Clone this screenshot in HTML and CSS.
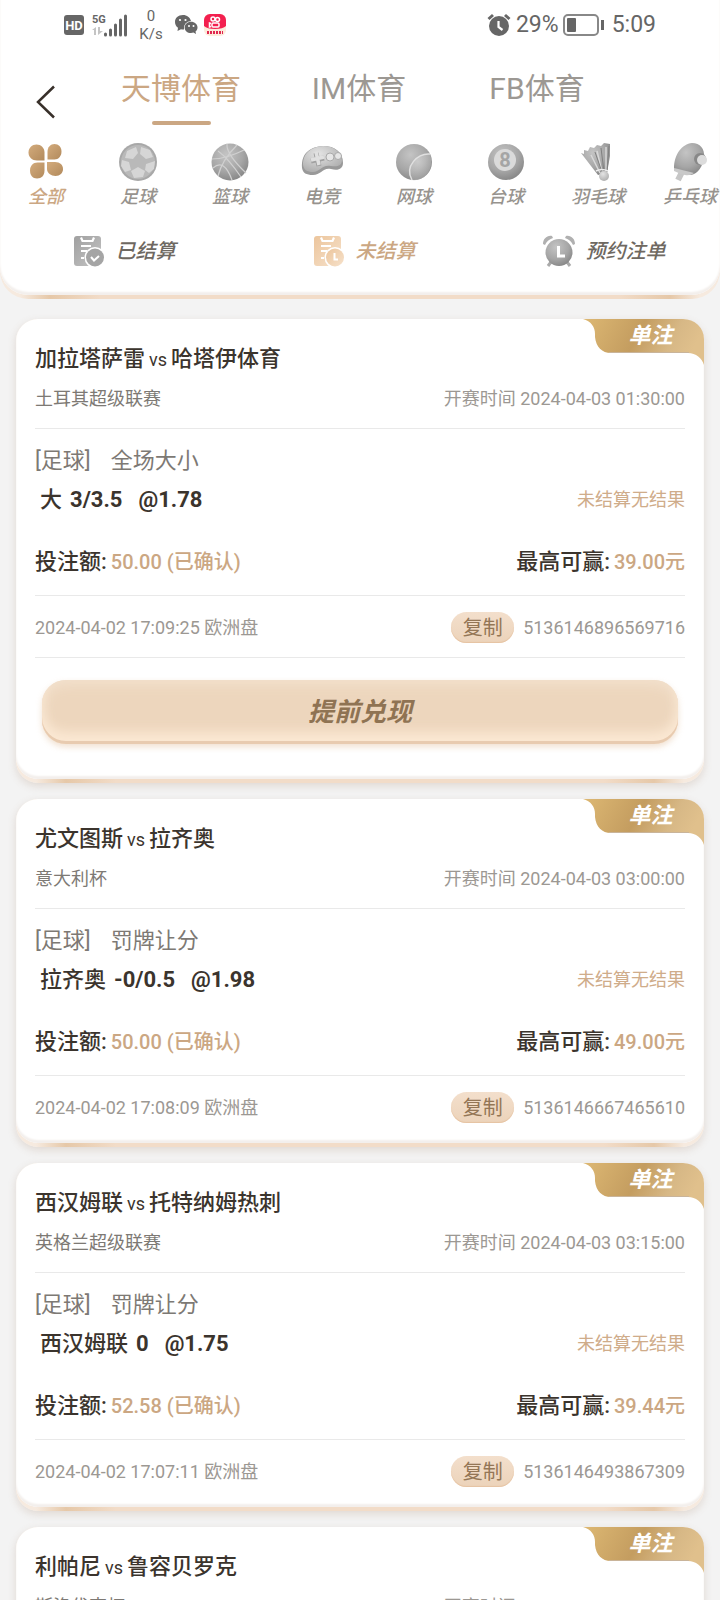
FILE: index.html
```
<!DOCTYPE html>
<html lang="zh-CN">
<head>
<meta charset="utf-8">
<meta name="viewport" content="width=device-width, initial-scale=1">
<title>未结算</title>
<link rel="stylesheet" href="styles.css">
</head>
<body>

<!-- shared shapes -->
<svg class="defs" aria-hidden="true">
    <defs>
        <linearGradient id="gold" x1="0" y1="0" x2="1" y2="0.2">
            <stop offset="0" stop-color="#ddb873"/>
            <stop offset="0.5" stop-color="#c49d60"/>
            <stop offset="0.8" stop-color="#d7b886"/>
            <stop offset="1" stop-color="#e0c08c"/>
        </linearGradient>
        <linearGradient id="leaf" x1="0" y1="0" x2="1" y2="1">
            <stop offset="0" stop-color="#d3ab7c"/>
            <stop offset="1" stop-color="#b28a5c"/>
        </linearGradient>
        <radialGradient id="ball" cx="0.4" cy="0.3" r="0.75">
            <stop offset="0" stop-color="#c4c4c4"/>
            <stop offset="0.6" stop-color="#a6a6a6"/>
            <stop offset="1" stop-color="#848484"/>
        </radialGradient>
        <radialGradient id="light" cx="0.4" cy="0.3" r="0.8">
            <stop offset="0" stop-color="#e4e4e4"/>
            <stop offset="1" stop-color="#a8a8a8"/>
        </radialGradient>
        <linearGradient id="gray" x1="0" y1="0" x2="1" y2="1">
            <stop offset="0" stop-color="#a0a0a0"/>
            <stop offset="1" stop-color="#c4c4c4"/>
        </linearGradient>
        <linearGradient id="peach" x1="0" y1="0" x2="1" y2="1">
            <stop offset="0" stop-color="#ecc59c"/>
            <stop offset="1" stop-color="#f6e2cc"/>
        </linearGradient>
        <symbol id="ribbon" viewBox="0 0 121 46">
            <path fill="url(#gold)" d="M0 0C8 2 12 8 12 15V18C13 28 19 34 28 34H105C113 34 119 39 121 46V20A21 20 0 0 0 100 0Z"/>
            <path stroke="#c9b49a" d="M26 33.500H106"/>
        </symbol>
    </defs>
</svg>

<header class="top">
    <div class="top-body">

        <div class="status">
            <svg class="status-hd" width="22" height="22" viewBox="0 0 22 22">
                <rect x="1" y="1" width="20" height="20" rx="3" fill="#666"/>
                <text x="11" y="16" text-anchor="middle">HD</text>
            </svg>
            <svg class="status-signal" width="36" height="24" viewBox="0 0 36 24">
                <text x="0" y="10">5G</text>
                <path fill="#c4c4c4" d="M0 17 4 14V22H2V17ZM6 14H8V18H11L6 22Z"/>
                <path d="M13.500 22V21M18.500 22V17M23.500 22V12M28.500 22V7M33.500 22V3" stroke="#666" stroke-width="3" stroke-linecap="round"/>
            </svg>
            <div class="status-speed"><div>0</div><div>K/s</div></div>
            <svg width="24" height="22" viewBox="0 0 24 22">
                <path fill="#666" d="M9 1C4 1 1 4 1 8c0 2.500 1.200 4.500 3 5.800L3.500 17 7 15.300c1 .200 2 .200 3 .100A7 7 0 0 1 17 7C16 3.500 13 1 9 1Z"/>
                <path fill="#666" d="M17 7.800c-3.700 0-6.300 2.500-6.300 5.600s2.600 5.600 6.300 5.600c.900 0 1.700-.100 2.400-.400L22 20l-.500-2.500c1.300-1 2-2.400 2-4.100 0-3.100-2.800-5.600-6.500-5.600Z"/>
                <g fill="#fff"><circle cx="6" cy="6" r="1.100"/><circle cx="11.500" cy="6" r="1.100"/><circle cx="15" cy="12" r="1"/><circle cx="19.500" cy="12" r="1"/></g>
            </svg>
            <svg class="status-app" width="24" height="24" viewBox="0 0 24 24">
                <rect x="1" y="1" width="22" height="22" rx="6" fill="#fdebdc"/>
                <path fill="#f3204f" d="M1 7a6 6 0 0 1 6-6h10a6 6 0 0 1 6 6v6q-3 3-11 3t-11-3Z"/>
                <g fill="none" stroke="#fff" stroke-width="1.500"><circle cx="10" cy="6" r="2"/><circle cx="14.500" cy="6.500" r="2"/><rect x="9" y="10" width="7" height="4" rx="1"/><path d="M8 10.500 6.500 10v4L8 13.500"/></g>
                <path stroke="#e0264f" stroke-width="3" stroke-dasharray="2 1" d="M4 19.500H20"/>
            </svg>
            <svg class="status-alarm" width="24" height="24" viewBox="0 0 24 24">
                <circle cx="12" cy="13" r="10" fill="#666"/>
                <path d="M1.500 6 6 2M22.500 6 18 2" stroke="#666" stroke-width="3"/>
                <path d="M11.500 8V14L15.500 17" fill="none" stroke="#fff" stroke-width="2.200"/>
            </svg>
            <span>29%</span>
            <svg width="42" height="24" viewBox="0 0 42 24">
                <rect x="1" y="2" width="34" height="20" rx="4" fill="none" stroke="#888" stroke-width="2"/>
                <rect x="4" y="5" width="9" height="14" rx="1" fill="#666"/>
                <path d="M39.500 7V17" stroke="#666" stroke-width="3"/>
            </svg>
            <span class="status-time">5:09</span>
        </div>

        <nav class="tabs">
            <button class="back" type="button" aria-label="返回">
                <svg width="20" height="34" viewBox="0 0 20 34"><path d="M18 1.500 2 17 18 32.500" fill="none" stroke="#38302a" stroke-width="2.500"/></svg>
            </button>
            <a class="tab tab-on" href="#tb">天博体育</a>
            <a class="tab" href="#im">IM体育</a>
            <a class="tab" href="#fb">FB体育</a>
        </nav>

        <nav class="sports">
            <a class="sport sport-on" href="#all">
                <svg width="40" height="40" viewBox="0 0 40 40" fill="url(#leaf)">
                    <path d="M18.500 18.500H11C6 18.500 2.500 15 2.500 10.500S6 2.500 10.500 2.500s8 3.500 8 8Z"/>
                    <path d="M21.500 17.500V10c0-5 3-8 7-8s7 3 7 7.500-3 8-7 8Z"/>
                    <path d="M18.500 20.500V28.500c0 5-3 8-7.500 8s-7-3.500-7-8 3-8 7.500-8Z"/>
                    <path d="M21 20H29c5 0 8 3 8 7s-3 7-7.500 7S21 31 21 27Z"/>
                </svg>
                <span>全部</span>
            </a>
            <a class="sport" href="#football">
                <svg width="40" height="40" viewBox="0 0 40 40">
                    <circle cx="20" cy="20" r="19" fill="#a8a8a8"/>
                    <circle cx="20" cy="20" r="17" fill="#b9b9b9"/>
                    <path fill="#d6d6d6" d="M9 9 18 5 20 11 15 17 7 16ZM23 5 32 8 35 15 28 17 22 12ZM4 18 11 20 13 28 7 30 3 24ZM13 29 20 25 27 29 25 35 16 36ZM28 22 37 19 36 27 31 31 27 28Z"/>
                </svg>
                <span>足球</span>
            </a>
            <a class="sport" href="#basketball">
                <svg width="40" height="40" viewBox="0 0 40 40">
                    <circle cx="20" cy="20" r="18.500" fill="url(#ball)"/>
                    <g fill="none" stroke="#d0d0d0" stroke-width="1.200"><path d="M17 2Q16 12 36 31M2 17Q16 17 34 8M8 34Q12 18 27 3M3 26Q14 16 22 38M8 9Q18 16 31 35"/></g>
                </svg>
                <span>篮球</span>
            </a>
            <a class="sport" href="#esports">
                <svg width="42" height="40" viewBox="0 0 42 40">
                    <path fill="#999" d="M1 26C0 10 10 5 22 4c12 0 20 6 20 17 0 6-5 8-12 6-8-2-10 6-18 6C5 33 2 31 1 26Z"/>
                    <path fill="url(#light)" d="M2 23C2 10 11 5 22 4c11 0 18 6 19 14 0 6-5 7-11 6-9-2-11 6-18 6C6 30 3 28 2 23Z"/>
                    <path d="M10 19 23 16M15 11 18 24" stroke="#a0a0a0" stroke-width="5"/>
                    <path d="M10 18 23 15M15 10 18 23" stroke="#e0e0e0" stroke-width="3.500"/>
                    <g fill="#e6e6e6" stroke="#aaa"><circle cx="29" cy="15" r="4"/><circle cx="37" cy="14" r="3.500"/></g>
                </svg>
                <span>电竞</span>
            </a>
            <a class="sport" href="#tennis">
                <svg width="40" height="40" viewBox="0 0 40 40">
                    <circle cx="20" cy="20" r="18" fill="url(#ball)"/>
                    <path fill="url(#light)" opacity="0.500" d="M36 12C24 11 10 24 18 38 30 40 41 28 36 12Z"/>
                    <path d="M36 12C24 11 10 24 18 38" fill="none" stroke="#e0e0e0" stroke-width="1.500"/>
                </svg>
                <span>网球</span>
            </a>
            <a class="sport" href="#snooker">
                <svg class="eight" width="40" height="40" viewBox="0 0 40 40">
                    <circle cx="20" cy="20" r="18" fill="url(#ball)"/>
                    <circle cx="19" cy="18" r="11" fill="#dadada"/>
                    <text x="19" y="25" text-anchor="middle">8</text>
                </svg>
                <span>台球</span>
            </a>
            <a class="sport" href="#badminton">
                <svg width="40" height="40" viewBox="0 0 40 40">
                    <path fill="url(#ball)" d="M3 11 6 12 6 8 10 9 12 5 16 6 19 3 23 4 26 1 32 2 32 14 29 31 20 33 13 24Z"/>
                    <path d="M13 13 22 31M19 9 24 30M28 5 28 30" stroke="#d8d8d8" stroke-width="1.500"/>
                    <path d="M17 10 24 30M23 6 26 30M31 4 29 30" stroke="#808080"/>
                    <path d="M18 29Q24 26 30 29" fill="none" stroke="#eee" stroke-width="1.500"/>
                    <circle cx="26" cy="34" r="5" fill="url(#light)"/>
                </svg>
                <span>羽毛球</span>
            </a>
            <a class="sport" href="#pingpong">
                <svg width="40" height="40" viewBox="0 0 40 40">
                    <path d="M13 28 8 38" stroke="#c6c6c6" stroke-width="6"/>
                    <path fill="url(#ball)" d="M4 27C4 12 12 2 22 1c8 0 13 6 12 14-1 9-6 17-13 18-6 0-11-4-17-6Z"/>
                    <path fill="#c9c9c9" d="M4 26q8 2 20 5-4 3-9 2T4 29Z"/>
                    <circle cx="30" cy="17" r="6" fill="#888"/>
                    <circle cx="32" cy="18" r="5" fill="#dcdcdc"/>
                </svg>
                <span>乒乓球</span>
            </a>
        </nav>

        <div class="filters">
            <button class="filter" type="button">
                <svg width="32" height="32" viewBox="0 0 32 32">
                    <rect x="1" y="1" width="27" height="30" rx="3" fill="url(#gray)"/>
                    <path d="M8 2.500 9.500 6H19.500L21 2.500M8 11H18M8 16H14M8 23H11" fill="none" stroke="#fff" stroke-width="2.200"/>
                    <circle cx="22" cy="22.500" r="10.500" fill="#fff"/><circle cx="22" cy="22.500" r="9" fill="#a5a5a5"/>
                    <path d="M18 22 21 25.500 26 21" fill="none" stroke="#fff" stroke-width="2"/>
                </svg>
                已结算
            </button>
            <button class="filter filter-on" type="button">
                <svg width="32" height="32" viewBox="0 0 32 32">
                    <rect x="1" y="1" width="27" height="30" rx="3" fill="url(#peach)"/>
                    <path d="M8 2.500 9.500 6H19.500L21 2.500M8 11H18M8 16H14M8 23H11" fill="none" stroke="#fff" stroke-width="2.200"/>
                    <circle cx="22" cy="22.500" r="10.500" fill="#fff"/><circle cx="22" cy="22.500" r="9" fill="url(#peach)"/>
                    <path d="M21.500 18V24.500H25" fill="none" stroke="#fff" stroke-width="2"/>
                </svg>
                未结算
            </button>
            <button class="filter" type="button">
                <svg width="32" height="32" viewBox="0 0 32 32">
                    <path fill="#b0b0b0" d="M0 9C0 4 4 0 9 1L10 3Q4 5 2 10ZM32 9C32 4 28 0 23 1L22 3Q28 5 30 10Z"/>
                    <path d="M8 27 5 31M24 27 27 31" stroke="#aaa" stroke-width="3"/>
                    <circle cx="16" cy="17.500" r="13.500" fill="url(#ball)"/>
                    <path d="M15.500 11V21H22" fill="none" stroke="#fff" stroke-width="3"/>
                </svg>
                预约注单
            </button>
        </div>

    </div>
</header>

<main class="list">

    <article class="card">
        <div class="card-body">
            <div class="badge"><svg><use href="#ribbon"/></svg><span>单注</span></div>
            <h2 class="teams">加拉塔萨雷<small>vs</small>哈塔伊体育</h2>
            <div class="row league"><span>土耳其超级联赛</span><time>开赛时间 2024-04-03 01:30:00</time></div>
            <div class="kind"><span>[足球]</span><span>全场大小</span></div>
            <div class="row pick"><div class="pick-name"><span>大</span><b>3/3.5</b><b class="odds">@1.78</b></div><span class="result">未结算无结果</span></div>
            <div class="row stake"><div>投注额:<em>50.00 (已确认)</em></div><div>最高可赢:<em>39.00元</em></div></div>
            <div class="row meta"><span>2024-04-02 17:09:25 欧洲盘</span><div class="order"><button class="copy" type="button">复制</button><span>5136146896569716</span></div></div>
            <div class="cash"><button class="cash-out" type="button">提前兑现</button></div>
        </div>
    </article>

    <article class="card">
        <div class="card-body">
            <div class="badge"><svg><use href="#ribbon"/></svg><span>单注</span></div>
            <h2 class="teams">尤文图斯<small>vs</small>拉齐奥</h2>
            <div class="row league"><span>意大利杯</span><time>开赛时间 2024-04-03 03:00:00</time></div>
            <div class="kind"><span>[足球]</span><span>罚牌让分</span></div>
            <div class="row pick"><div class="pick-name"><span>拉齐奥</span><b>-0/0.5</b><b class="odds">@1.98</b></div><span class="result">未结算无结果</span></div>
            <div class="row stake"><div>投注额:<em>50.00 (已确认)</em></div><div>最高可赢:<em>49.00元</em></div></div>
            <div class="row meta"><span>2024-04-02 17:08:09 欧洲盘</span><div class="order"><button class="copy" type="button">复制</button><span>5136146667465610</span></div></div>
        </div>
    </article>

    <article class="card">
        <div class="card-body">
            <div class="badge"><svg><use href="#ribbon"/></svg><span>单注</span></div>
            <h2 class="teams">西汉姆联<small>vs</small>托特纳姆热刺</h2>
            <div class="row league"><span>英格兰超级联赛</span><time>开赛时间 2024-04-03 03:15:00</time></div>
            <div class="kind"><span>[足球]</span><span>罚牌让分</span></div>
            <div class="row pick"><div class="pick-name"><span>西汉姆联</span><b>0</b><b class="odds">@1.75</b></div><span class="result">未结算无结果</span></div>
            <div class="row stake"><div>投注额:<em>52.58 (已确认)</em></div><div>最高可赢:<em>39.44元</em></div></div>
            <div class="row meta"><span>2024-04-02 17:07:11 欧洲盘</span><div class="order"><button class="copy" type="button">复制</button><span>5136146493867309</span></div></div>
        </div>
    </article>

    <article class="card">
        <div class="card-body">
            <div class="badge"><svg><use href="#ribbon"/></svg><span>单注</span></div>
            <h2 class="teams">利帕尼<small>vs</small>鲁容贝罗克</h2>
            <div class="row league"><span>斯洛伐克杯</span><time>开赛时间 2024-04-03 00:00:00</time></div>
        </div>
    </article>

</main>

</body>
</html>
```

FILE: styles.css
```
* {
    box-sizing: border-box;
}

body {
    margin: 0;
    height: 100vh;
    display: flex;
    flex-direction: column;
    overflow: hidden;
    background: #f3f3f3;
    color: #3b342d;
    font: 18px/28px Roboto, "Noto Sans CJK SC", sans-serif;
}

button {
    border: 0;
    padding: 0;
    background: none;
    color: inherit;
    font: inherit;
}

a {
    color: inherit;
    text-decoration: none;
}

svg {
    flex: none;
}

.defs {
    position: absolute;
    width: 0;
    height: 0;
}

/* header */

.top {
    flex: none;
    padding-bottom: 4px;
    border-radius: 0 0 28px 28px;
    background: linear-gradient(90deg, #f6eadf 20px, #e6c8a8 50px, #f2dcc8 100px, #f2dcc8 calc(100% - 100px), #e6c8a8 calc(100% - 50px), #f6eadf calc(100% - 20px));
}

.top-body {
    padding-bottom: 24px;
    border-radius: 0 0 28px 28px;
    background: #fff;
    box-shadow: inset 0 -3px 2px #f3efec;
}

.status {
    display: flex;
    align-items: center;
    height: 50px;
    padding: 0 64px 0 63px;
    color: #666;
    font-size: 23px;
}

.status-hd text {
    fill: #fff;
    font: bold 13px Roboto, sans-serif;
}

.status-signal {
    margin-left: 7px;
}

.status-signal text {
    fill: #666;
    font: bold 11px Roboto, sans-serif;
}

.status-speed {
    width: 46px;
    font-size: 15px;
    line-height: 18px;
    text-align: center;
}

.status-app {
    margin-left: 5px;
}

.status-alarm {
    margin: 0 5px 0 auto;
}

.status svg + span + svg {
    margin-left: 4px;
}

.status-time {
    margin-left: 7px;
}

.tabs {
    display: grid;
    grid-template-columns: 92px repeat(3, 1fr);
    padding: 19px 94px 0 0;
}

.back {
    align-self: end;
    height: 46px;
    display: flex;
    align-items: center;
    justify-content: center;
}

.tab {
    display: flex;
    flex-direction: column;
    align-items: center;
    gap: 12px;
    color: #9c9893;
    font-size: 30px;
    line-height: 40px;
}

.tab::after {
    content: "";
    width: 59px;
    height: 4px;
    border-radius: 2px;
}

.tab-on {
    color: #cba783;
}

.tab-on::after {
    background: #cba783;
}

.sports {
    display: flex;
    overflow: hidden;
    padding-top: 17px;
}

.sport {
    flex: none;
    width: 92px;
    display: flex;
    flex-direction: column;
    align-items: center;
    gap: 1px;
    color: #97938e;
    font-style: italic;
    font-weight: 500;
}

.sport-on {
    color: #cba783;
}

.eight text {
    fill: #a5a5a5;
    font: bold 20px Roboto, sans-serif;
}

.filters {
    display: flex;
    margin-top: 20px;
}

.filter {
    flex: 1;
    display: flex;
    align-items: center;
    justify-content: center;
    gap: 11px;
    padding-left: 8px;
    color: #6e6861;
    font-size: 20px;
    font-style: italic;
    font-weight: 500;
    line-height: 40px;
}

.filter-on {
    color: #cba783;
}

/* bet list */

.list {
    flex: 1;
    min-height: 0;
    overflow: hidden;
    padding: 20px 16px 0;
}

.card {
    margin-bottom: 16px;
    padding-bottom: 4px;
    border-radius: 22px;
    background: linear-gradient(90deg, #f6eadf 20px, #e6c8a8 50px, #f2dcc8 100px, #f2dcc8 calc(100% - 100px), #e6c8a8 calc(100% - 50px), #f6eadf calc(100% - 20px));
    box-shadow: 0 3px 8px rgba(150, 110, 80, 0.2);
}

.card-body {
    position: relative;
    padding: 24px 19px 20px;
    border-radius: 22px;
    background: #fff;
    box-shadow: inset 0 -3px 2px #f3efec;
}

.badge {
    position: absolute;
    top: 0;
    right: 0;
    width: 121px;
    height: 46px;
    padding-left: 14px;
    color: #fff;
    font-size: 22px;
    font-style: italic;
    font-weight: bold;
    line-height: 34px;
    text-align: center;
}

.badge svg {
    position: absolute;
    top: 0;
    left: 0;
    width: 121px;
    height: 46px;
}

.badge span {
    position: relative;
}

.row {
    display: flex;
    align-items: center;
    justify-content: space-between;
}

.teams {
    margin: 0;
    font-size: 22px;
    font-weight: 500;
    line-height: 32px;
}

.teams small {
    margin: 0 4px;
    font-size: 18px;
    font-weight: 400;
}

.league {
    padding: 9px 0 15px;
    border-bottom: 1px solid #e9e9e9;
    color: #7d7974;
}

.league time {
    color: #9c9893;
}

.kind {
    display: flex;
    gap: 20px;
    margin-top: 16px;
    color: #7d7974;
    font-size: 22px;
    line-height: 32px;
}

.pick {
    margin-top: 7px;
    line-height: 32px;
}

.pick-name {
    display: flex;
    gap: 8px;
    padding-left: 5px;
    font-size: 22px;
    font-weight: 500;
}

.odds {
    margin-left: 8px;
}

.result {
    color: #cfac8a;
}

.stake {
    margin-top: 30px;
    padding-bottom: 17px;
    border-bottom: 1px solid #e9e9e9;
    font-size: 22px;
    font-weight: 500;
    line-height: 32px;
}

.stake em {
    margin-left: 4px;
    color: #cba783;
    font-size: 20px;
    font-style: normal;
}

.meta {
    padding-top: 16px;
    color: #9c9893;
}

.order {
    display: flex;
    align-items: center;
    gap: 9px;
}

.copy {
    width: 63px;
    height: 31px;
    border-radius: 16px;
    background: linear-gradient(#f3dfcc, #ecd3ba);
    box-shadow: inset 0 -1px 1px #e6c3a2;
    color: #947656;
    font-size: 20px;
    line-height: 30px;
}

.cash {
    margin-top: 14px;
    padding: 22px 7px 15px;
    border-top: 1px solid #e9e9e9;
}

.cash-out {
    width: 100%;
    height: 64px;
    border-radius: 24px;
    background: #edd6bd;
    box-shadow: inset 0 -3px 0 #e8cbb0, inset 0 -12px 12px #fbe8d3, inset 0 4px 14px #f3e2cf, 0 3px 6px rgba(220, 180, 140, 0.4);
    color: #8f7353;
    font-size: 26px;
    font-style: italic;
    font-weight: bold;
}
```
